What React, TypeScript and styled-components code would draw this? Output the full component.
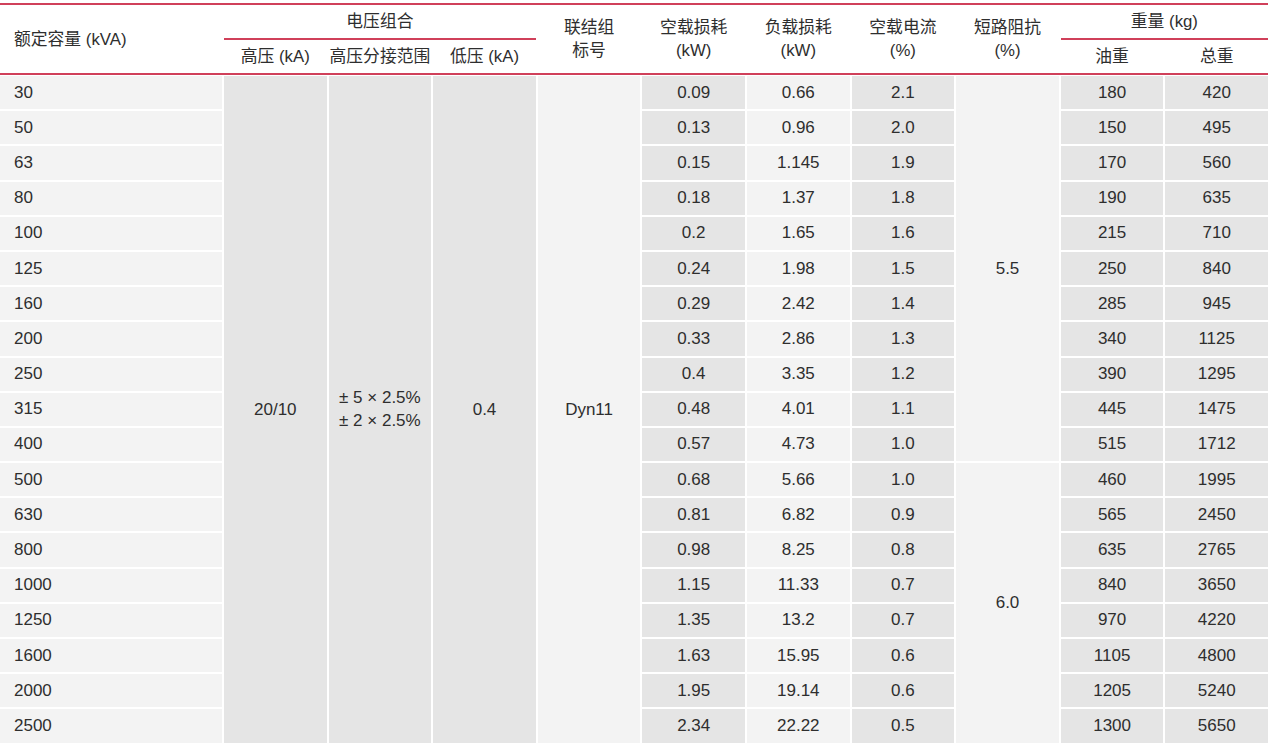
import styled, { createGlobalStyle } from 'styled-components'

/* data */
type Row = {
  kva: string
  noLoad: string
  load: string
  current: string
  oil: string
  total: string
}

const rows: Row[] = [
  { kva: '30', noLoad: '0.09', load: '0.66', current: '2.1', oil: '180', total: '420' },
  { kva: '50', noLoad: '0.13', load: '0.96', current: '2.0', oil: '150', total: '495' },
  { kva: '63', noLoad: '0.15', load: '1.145', current: '1.9', oil: '170', total: '560' },
  { kva: '80', noLoad: '0.18', load: '1.37', current: '1.8', oil: '190', total: '635' },
  { kva: '100', noLoad: '0.2', load: '1.65', current: '1.6', oil: '215', total: '710' },
  { kva: '125', noLoad: '0.24', load: '1.98', current: '1.5', oil: '250', total: '840' },
  { kva: '160', noLoad: '0.29', load: '2.42', current: '1.4', oil: '285', total: '945' },
  { kva: '200', noLoad: '0.33', load: '2.86', current: '1.3', oil: '340', total: '1125' },
  { kva: '250', noLoad: '0.4', load: '3.35', current: '1.2', oil: '390', total: '1295' },
  { kva: '315', noLoad: '0.48', load: '4.01', current: '1.1', oil: '445', total: '1475' },
  { kva: '400', noLoad: '0.57', load: '4.73', current: '1.0', oil: '515', total: '1712' },
  { kva: '500', noLoad: '0.68', load: '5.66', current: '1.0', oil: '460', total: '1995' },
  { kva: '630', noLoad: '0.81', load: '6.82', current: '0.9', oil: '565', total: '2450' },
  { kva: '800', noLoad: '0.98', load: '8.25', current: '0.8', oil: '635', total: '2765' },
  { kva: '1000', noLoad: '1.15', load: '11.33', current: '0.7', oil: '840', total: '3650' },
  { kva: '1250', noLoad: '1.35', load: '13.2', current: '0.7', oil: '970', total: '4220' },
  { kva: '1600', noLoad: '1.63', load: '15.95', current: '0.6', oil: '1105', total: '4800' },
  { kva: '2000', noLoad: '1.95', load: '19.14', current: '0.6', oil: '1205', total: '5240' },
  { kva: '2500', noLoad: '2.34', load: '22.22', current: '0.5', oil: '1300', total: '5650' },
]

const RED = '#d0405a'
const LIGHT = '#f3f3f3'
const DARK = '#e5e5e5'
const COLUMNS = '222px repeat(10, 1fr)'

const GlobalStyle = createGlobalStyle`
  html, body {
    margin: 0;
    padding: 0;
    background: #fff;
  }

  body {
    font-family: "Liberation Sans", "Noto Sans CJK SC", sans-serif;
    color: #2e2e2e;
    overflow: hidden;
  }
`

const StyledPage = styled.div`
  width: 1268px;
  height: 744px;
  padding-top: 3px;
  box-sizing: border-box;
  overflow: hidden;
`

/* header */
const Head = styled.div`
  display: grid;
  grid-template-columns: ${COLUMNS};
  grid-template-rows: 35px 33px;
  column-gap: 2px;
  border-top: 2px solid ${RED};
  border-bottom: 2px solid ${RED};
`

const HeadCell = styled.div<{
  $col: string
  $row: string
  $left?: boolean
  $rule?: boolean
}>`
  grid-column: ${({ $col }) => $col};
  grid-row: ${({ $row }) => $row};
  display: flex;
  flex-direction: column;
  justify-content: center;
  align-items: ${({ $left }) => ($left ? 'flex-start' : 'center')};
  padding-left: ${({ $left }) => ($left ? '14px' : '0')};
  font-size: 16.8px;
  line-height: 23px;
  box-sizing: border-box;
  border-bottom: ${({ $rule }) => ($rule ? `2px solid ${RED}` : 'none')};
  white-space: nowrap;
`

/* body */
const Body = styled.div`
  display: grid;
  grid-template-columns: ${COLUMNS};
  grid-auto-rows: 33.2px;
  gap: 2px;
  margin-top: 1px;
`

const Cell = styled.div<{ $tone: 'light' | 'dark'; $left?: boolean }>`
  display: flex;
  align-items: center;
  justify-content: ${({ $left }) => ($left ? 'flex-start' : 'center')};
  padding-left: ${({ $left }) => ($left ? '14px' : '0')};
  background: ${({ $tone }) => ($tone === 'light' ? LIGHT : DARK)};
  font-size: 17px;
`

const MergedCell = styled(Cell)<{ $col: number; $from: number; $to: number }>`
  grid-column: ${({ $col }) => $col};
  grid-row: ${({ $from, $to }) => `${$from} / ${$to}`};
  flex-direction: column;
  line-height: 23px;
`

export default function App() {
  const last = rows.length + 1

  return (
    <>
      <GlobalStyle />
      <StyledPage>
        <Head>
          <HeadCell $col="1" $row="1 / 3" $left>
            额定容量 (kVA)
          </HeadCell>
          <HeadCell $col="2 / 5" $row="1" $rule>
            电压组合
          </HeadCell>
          <HeadCell $col="2" $row="2">高压 (kA)</HeadCell>
          <HeadCell $col="3" $row="2">高压分接范围</HeadCell>
          <HeadCell $col="4" $row="2">低压 (kA)</HeadCell>
          <HeadCell $col="5" $row="1 / 3">
            <span>联结组</span>
            <span>标号</span>
          </HeadCell>
          <HeadCell $col="6" $row="1 / 3">
            <span>空载损耗</span>
            <span>(kW)</span>
          </HeadCell>
          <HeadCell $col="7" $row="1 / 3">
            <span>负载损耗</span>
            <span>(kW)</span>
          </HeadCell>
          <HeadCell $col="8" $row="1 / 3">
            <span>空载电流</span>
            <span>(%)</span>
          </HeadCell>
          <HeadCell $col="9" $row="1 / 3">
            <span>短路阻抗</span>
            <span>(%)</span>
          </HeadCell>
          <HeadCell $col="10 / 12" $row="1" $rule>
            重量 (kg)
          </HeadCell>
          <HeadCell $col="10" $row="2">油重</HeadCell>
          <HeadCell $col="11" $row="2">总重</HeadCell>
        </Head>

        <Body>
          {/* merged columns are placed first, the rest flow around them */}
          <MergedCell $tone="dark" $col={2} $from={1} $to={last}>
            20/10
          </MergedCell>
          <MergedCell $tone="dark" $col={3} $from={1} $to={last}>
            <span>± 5 × 2.5%</span>
            <span>± 2 × 2.5%</span>
          </MergedCell>
          <MergedCell $tone="dark" $col={4} $from={1} $to={last}>
            0.4
          </MergedCell>
          <MergedCell $tone="light" $col={5} $from={1} $to={last}>
            Dyn11
          </MergedCell>
          <MergedCell $tone="light" $col={9} $from={1} $to={12}>
            5.5
          </MergedCell>
          <MergedCell $tone="light" $col={9} $from={12} $to={last}>
            6.0
          </MergedCell>

          {rows.map((row) => [
            <Cell key={`${row.kva}-kva`} $tone="light" $left>
              {row.kva}
            </Cell>,
            <Cell key={`${row.kva}-noload`} $tone="dark">
              {row.noLoad}
            </Cell>,
            <Cell key={`${row.kva}-load`} $tone="light">
              {row.load}
            </Cell>,
            <Cell key={`${row.kva}-current`} $tone="dark">
              {row.current}
            </Cell>,
            <Cell key={`${row.kva}-oil`} $tone="dark">
              {row.oil}
            </Cell>,
            <Cell key={`${row.kva}-total`} $tone="dark">
              {row.total}
            </Cell>,
          ])}
        </Body>
      </StyledPage>
    </>
  )
}
